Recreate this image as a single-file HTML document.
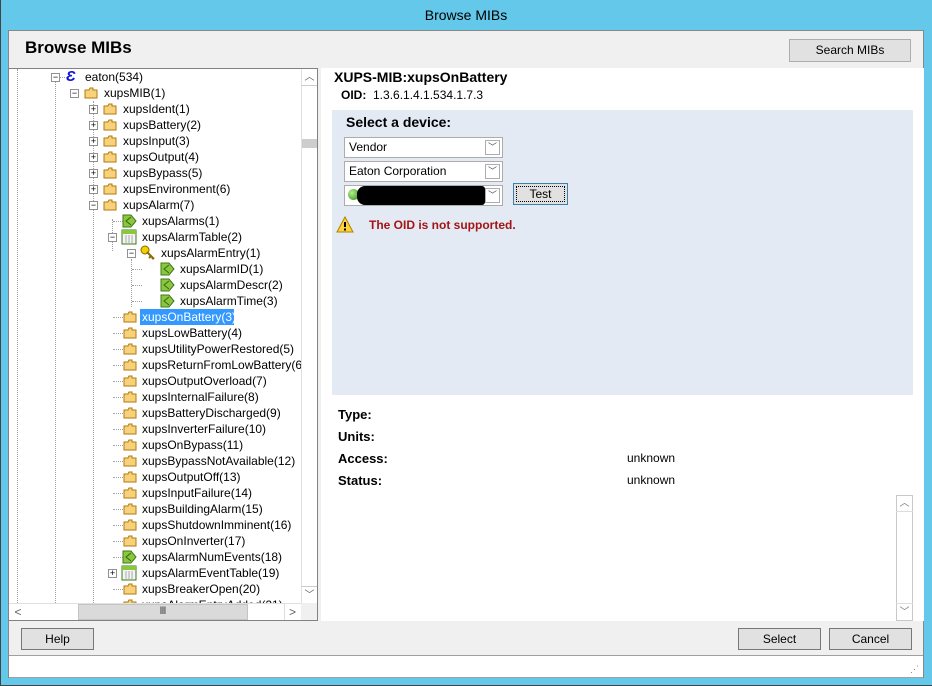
<!DOCTYPE html>
<html><head><meta charset="utf-8">
<style>
*{margin:0;padding:0;box-sizing:border-box}
body{width:932px;height:686px;overflow:hidden;background:#63c8e9;font-family:"Liberation Sans",sans-serif;font-size:12px;color:#000;position:relative}
.a{position:absolute}
.btn{position:absolute;background:#e1e1e1;border:1px solid #adadad;text-align:center;font-size:12px;line-height:20px}
.r{position:absolute;height:16px;line-height:16px;white-space:nowrap;font-size:12px}
.ex{position:absolute;width:9px;height:9px;border:1px solid #919191;background:#fff;font-size:9px;line-height:7px;text-align:center;color:#000}
.hl{position:absolute;border-top:1px dotted #a0a0a0;height:0;width:10px}
.vl{position:absolute;border-left:1px dotted #a0a0a0;width:0}
.cb{position:absolute;left:344px;width:159px;height:21px;background:#fff;border:1px solid #acacac;line-height:19px;padding-left:4px;font-size:12px}
.cb i{position:absolute;right:2px;top:2px;width:15px;height:15px;border:1px solid #acacac;background:#fff;font-style:normal;font-size:9px;line-height:13px;text-align:center;color:#555}
.lb{position:absolute;left:338px;font-weight:bold;font-size:13px}
</style></head><body>
<div class="a" style="left:0;top:0;width:932px;height:30px;text-align:center;line-height:30px;font-size:14px;color:#000">Browse MIBs</div>
<div class="a" style="left:0;top:0;width:1px;height:686px;background:#444"></div>
<div class="a" style="left:0;top:685px;width:932px;height:1px;background:#444"></div>
<div class="a" style="left:8px;top:30px;width:916px;height:648px;background:#f0f0f0;border:1px solid #888"></div>
<div class="a" style="left:25px;top:38px;font-size:17px;font-weight:bold">Browse MIBs</div>
<div class="btn" style="left:789px;top:39px;width:122px;height:23px">Search MIBs</div>

<!-- tree -->
<div class="a" style="left:8px;top:68px;width:310px;height:553px;background:#fff;border:1px solid #828282;overflow:hidden">
<div class="a" style="left:0;top:0;width:292px;height:534px;overflow:hidden">
<div class="vl" style="left:8px;top:0;height:540px"></div>
<div class="vl" style="left:46px;top:8px;height:540px"></div>
<div class="vl" style="left:84px;top:32px;height:510px"></div>
<div class="vl" style="left:103px;top:150px;height:32px"></div>
<div class="vl" style="left:122px;top:190px;height:48px"></div>
<div id="t"></div>
<!-- rows -->
<div class="hl" style="left:50px;top:8px;width:8px"></div><div class="ex" style="left:42px;top:4px">−</div>
<div class="r" style="left:57px;top:0;color:#1010e0;font-weight:bold;font-size:15px;font-style:italic">Ɛ</div><div class="r" style="left:76px;top:0">eaton(534)</div>

<div class="ex" style="left:61px;top:20px">−</div>
<svg class="a" style="left:75px;top:18px" width="14" height="12"><path d="M1 3h4l1-2h3v2h4v8H1z" fill="#f8d27a" stroke="#b07a10"/></svg><div class="r" style="left:95px;top:16px">xupsMIB(1)</div>

<div class="ex" style="left:80px;top:36px">+</div><svg class="a" style="left:94px;top:34px" width="14" height="12"><path d="M1 3h4l1-2h3v2h4v8H1z" fill="#f8d27a" stroke="#b07a10"/></svg><div class="r" style="left:114px;top:32px">xupsIdent(1)</div>
<div class="ex" style="left:80px;top:52px">+</div><svg class="a" style="left:94px;top:50px" width="14" height="12"><path d="M1 3h4l1-2h3v2h4v8H1z" fill="#f8d27a" stroke="#b07a10"/></svg><div class="r" style="left:114px;top:48px">xupsBattery(2)</div>
<div class="ex" style="left:80px;top:68px">+</div><svg class="a" style="left:94px;top:66px" width="14" height="12"><path d="M1 3h4l1-2h3v2h4v8H1z" fill="#f8d27a" stroke="#b07a10"/></svg><div class="r" style="left:114px;top:64px">xupsInput(3)</div>
<div class="ex" style="left:80px;top:84px">+</div><svg class="a" style="left:94px;top:82px" width="14" height="12"><path d="M1 3h4l1-2h3v2h4v8H1z" fill="#f8d27a" stroke="#b07a10"/></svg><div class="r" style="left:114px;top:80px">xupsOutput(4)</div>
<div class="ex" style="left:80px;top:100px">+</div><svg class="a" style="left:94px;top:98px" width="14" height="12"><path d="M1 3h4l1-2h3v2h4v8H1z" fill="#f8d27a" stroke="#b07a10"/></svg><div class="r" style="left:114px;top:96px">xupsBypass(5)</div>
<div class="ex" style="left:80px;top:116px">+</div><svg class="a" style="left:94px;top:114px" width="14" height="12"><path d="M1 3h4l1-2h3v2h4v8H1z" fill="#f8d27a" stroke="#b07a10"/></svg><div class="r" style="left:114px;top:112px">xupsEnvironment(6)</div>
<div class="ex" style="left:80px;top:132px">−</div><svg class="a" style="left:94px;top:130px" width="14" height="12"><path d="M1 3h4l1-2h3v2h4v8H1z" fill="#f8d27a" stroke="#b07a10"/></svg><div class="r" style="left:114px;top:128px">xupsAlarm(7)</div>

<div class="hl" style="left:104px;top:152px"></div><svg class="a" style="left:112px;top:144px" width="16" height="16"><path d="M2 2h8l5 6-5 6H2z" fill="#8cc63f" stroke="#3d7a1a"/><path d="M10 4L5 8l5 4" fill="none" stroke="#2d6a10"/></svg><div class="r" style="left:133px;top:144px">xupsAlarms(1)</div>
<div class="ex" style="left:99px;top:164px">−</div><svg class="a" style="left:112px;top:160px" width="16" height="16"><rect x="1" y="1" width="14" height="14" fill="#f4f4f4" stroke="#3d7a1a"/><rect x="1" y="1" width="14" height="4" fill="#8cc63f"/><path d="M5 6v8M8 6v8M11 6v8" stroke="#aaa"/></svg><div class="r" style="left:133px;top:160px">xupsAlarmTable(2)</div>
<div class="ex" style="left:118px;top:180px">−</div><svg class="a" style="left:131px;top:176px" width="16" height="16"><circle cx="5" cy="5" r="4" fill="#f5d000" stroke="#8a6a00"/><path d="M7 7l7 7M11 11l-2 2M13 13l-1 1" stroke="#8a6a00" stroke-width="2"/></svg><div class="r" style="left:152px;top:176px">xupsAlarmEntry(1)</div>
<div class="hl" style="left:123px;top:200px"></div><svg class="a" style="left:150px;top:192px" width="16" height="16"><path d="M2 2h8l5 6-5 6H2z" fill="#8cc63f" stroke="#3d7a1a"/><path d="M10 4L5 8l5 4" fill="none" stroke="#2d6a10"/></svg><div class="r" style="left:171px;top:192px">xupsAlarmID(1)</div>
<div class="hl" style="left:123px;top:216px"></div><svg class="a" style="left:150px;top:208px" width="16" height="16"><path d="M2 2h8l5 6-5 6H2z" fill="#8cc63f" stroke="#3d7a1a"/><path d="M10 4L5 8l5 4" fill="none" stroke="#2d6a10"/></svg><div class="r" style="left:171px;top:208px">xupsAlarmDescr(2)</div>
<div class="hl" style="left:123px;top:232px"></div><svg class="a" style="left:150px;top:224px" width="16" height="16"><path d="M2 2h8l5 6-5 6H2z" fill="#8cc63f" stroke="#3d7a1a"/><path d="M10 4L5 8l5 4" fill="none" stroke="#2d6a10"/></svg><div class="r" style="left:171px;top:224px">xupsAlarmTime(3)</div>

<div class="a" style="left:131px;top:240px;width:94px;height:16px;background:#3399ff"></div>
<div id="f"></div>
</div>
<!-- vscroll -->
<div class="a" style="left:292px;top:0;width:17px;height:534px;background:#fff;border-left:1px solid #e0e0e0"></div>
<div class="a" style="left:292px;top:0;width:17px;height:17px;text-align:center;color:#606060;font-size:10px;line-height:17px;border-bottom:1px solid #ccc">︿</div>
<div class="a" style="left:293px;top:70px;width:16px;height:9px;background:#cdcdcd"></div>
<div class="a" style="left:292px;top:517px;width:17px;height:17px;text-align:center;color:#606060;font-size:10px;line-height:17px;border-top:1px solid #ccc">﹀</div>
<!-- hscroll -->
<div class="a" style="left:0;top:534px;width:292px;height:17px;background:#fff;border-top:1px solid #e0e0e0"></div>
<div class="a" style="left:1px;top:535px;width:16px;height:16px;text-align:center;color:#606060;line-height:16px">&lt;</div>
<div class="a" style="left:69px;top:535px;width:170px;height:16px;background:#dadada;border:1px solid #c4c4c4;text-align:center;line-height:14px;font-size:10px;color:#444">Ⅲ</div>
<div class="a" style="left:275px;top:535px;width:16px;height:16px;text-align:center;color:#606060;line-height:16px;border-left:1px solid #ddd">&gt;</div>
<div class="a" style="left:292px;top:534px;width:17px;height:17px;background:#f0f0f0"></div>
</div>

<!-- right panel -->
<div class="a" style="left:321px;top:68px;width:603px;height:553px;background:#fff"></div>
<div class="a" style="left:334px;top:69px;font-size:14px;font-weight:bold">XUPS-MIB:xupsOnBattery</div>
<div class="a" style="left:341px;top:88px;font-size:12px"><b>OID:</b>&nbsp; 1.3.6.1.4.1.534.1.7.3</div>
<div class="a" style="left:332px;top:110px;width:581px;height:285px;background:#e3eaf4"></div>
<div class="a" style="left:346px;top:114px;font-size:14px;font-weight:bold">Select a device:</div>
<div class="cb" style="top:137px">Vendor<i>﹀</i></div>
<div class="cb" style="top:161px">Eaton Corporation<i>﹀</i></div>
<div class="cb" style="top:185px"><i>﹀</i></div>
<div class="a" style="left:348px;top:189px;width:11px;height:11px;border-radius:50%;background:radial-gradient(circle at 35% 35%,#b6f08c,#2a8a1a)"></div>
<div class="a" style="left:357px;top:186px;width:128px;height:19px;background:#000;border-radius:8px 3px 3px 8px"></div>
<div class="btn" style="left:513px;top:183px;width:55px;height:22px;border:1px solid #3c7fb1;line-height:20px;outline:1px dotted #000;outline-offset:-4px">Test</div>
<svg class="a" style="left:336px;top:216px" width="18" height="17"><path d="M9 1L17 16H1z" fill="#ffd33d" stroke="#b08000"/><path d="M9 6v5" stroke="#000" stroke-width="2"/><rect x="8" y="12.5" width="2" height="2" fill="#000"/></svg>
<div class="a" style="left:369px;top:218px;font-size:12px;font-weight:bold;color:#a31515">The OID is not supported.</div>

<div class="lb" style="top:407px">Type:</div>
<div class="lb" style="top:429px">Units:</div>
<div class="lb" style="top:451px">Access:</div>
<div class="lb" style="top:473px">Status:</div>
<div class="a" style="left:627px;top:451px;font-size:12px">unknown</div>
<div class="a" style="left:627px;top:473px;font-size:12px">unknown</div>
<div class="a" style="left:896px;top:495px;width:17px;height:126px;border:1px solid #c8c8c8;background:#fff"></div>
<div class="a" style="left:896px;top:495px;width:17px;height:17px;text-align:center;color:#777;font-size:10px;line-height:17px;border-bottom:1px solid #ddd">︿</div>
<div class="a" style="left:896px;top:603px;width:17px;height:17px;text-align:center;color:#777;font-size:10px;line-height:17px;border-top:1px solid #ddd">﹀</div>

<div class="btn" style="left:21px;top:628px;width:73px;height:22px;border-color:#777">Help</div>
<div class="btn" style="left:738px;top:628px;width:83px;height:22px;border-color:#777">Select</div>
<div class="btn" style="left:829px;top:628px;width:83px;height:22px;border-color:#777">Cancel</div>
<div class="a" style="left:9px;top:655px;width:914px;height:23px;background:#fff;border-top:1px solid #a0a0a0;border-bottom:1px solid #a0a0a0"></div>
<div class="a" style="left:910px;top:664px;font-size:9px;color:#888;letter-spacing:-1px">⋰</div>

<script>
var f=document.getElementById('f'),names=["xupsOnBattery(3)","xupsLowBattery(4)","xupsUtilityPowerRestored(5)","xupsReturnFromLowBattery(6)","xupsOutputOverload(7)","xupsInternalFailure(8)","xupsBatteryDischarged(9)","xupsInverterFailure(10)","xupsOnBypass(11)","xupsBypassNotAvailable(12)","xupsOutputOff(13)","xupsInputFailure(14)","xupsBuildingAlarm(15)","xupsShutdownImminent(16)","xupsOnInverter(17)","xupsAlarmNumEvents(18)","xupsAlarmEventTable(19)","xupsBreakerOpen(20)","xupsAlarmEntryAdded(21)"],h='';
var fold='<path d="M1 3h4l1-2h3v2h4v8H1z" fill="#f8d27a" stroke="#b07a10"/>';
for(var i=0;i<names.length;i++){var y=240+16*i,n=names[i];
 var ic=fold,w=14,hh=12,oy=2;
 if(i==15){ic='<path d="M2 2h8l5 6-5 6H2z" fill="#8cc63f" stroke="#3d7a1a"/><path d="M10 4L5 8l5 4" fill="none" stroke="#2d6a10"/>';w=16;hh=16;oy=0;}
 if(i==16){ic='<rect x="1" y="1" width="14" height="14" fill="#f4f4f4" stroke="#3d7a1a"/><rect x="1" y="1" width="14" height="4" fill="#8cc63f"/><path d="M5 6v8M8 6v8M11 6v8" stroke="#aaa"/>';w=16;hh=16;oy=0;h+='<div class="ex" style="left:99px;top:'+(y+4)+'px">+</div>';}
 else h+='<div class="hl" style="left:104px;top:'+(y+8)+'px"></div>';
 h+='<svg class="a" style="left:'+(w==14?114:112)+'px;top:'+(y+oy)+'px" width="'+w+'" height="'+hh+'">'+ic+'</svg>';
 h+='<div class="r" style="left:133px;top:'+y+'px;'+(i==0?'color:#fff':'')+'">'+n+'</div>';}
f.innerHTML=h;
</script>
</body></html>
